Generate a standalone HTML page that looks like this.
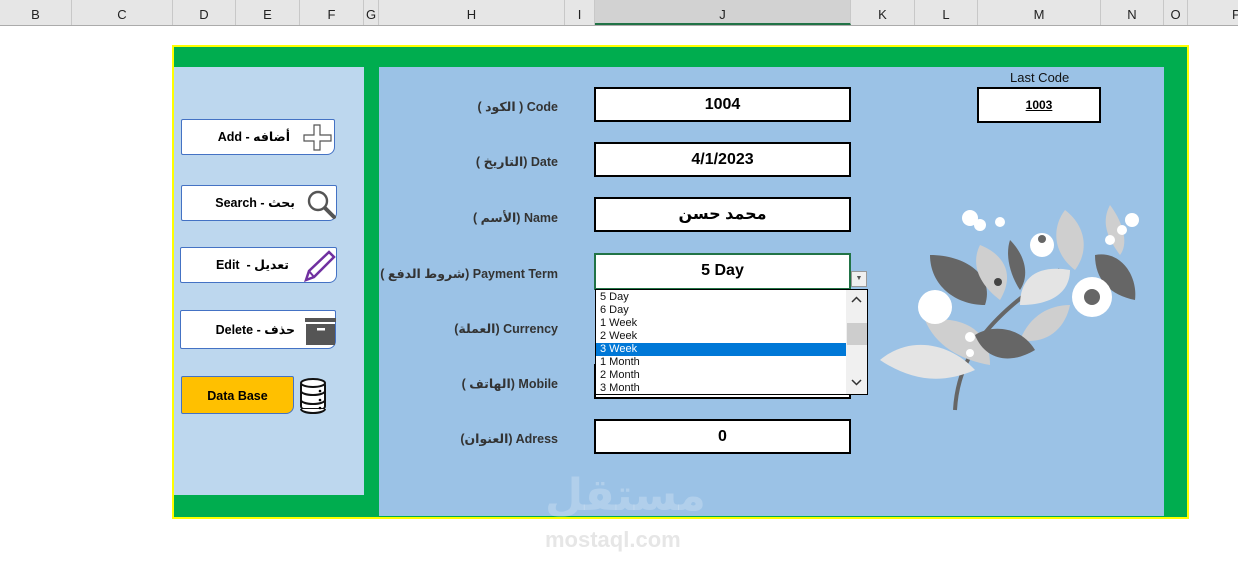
<!DOCTYPE html>
<html><head><meta charset="utf-8"><style>
body{margin:0;width:1238px;height:563px;background:#fff;position:relative;overflow:hidden;font-family:"Liberation Sans","DejaVu Sans",sans-serif}
.a{position:absolute}
.hdr{left:0;top:0;width:1238px;height:25px;background:#e6e6e6;border-bottom:1px solid #ababab}
.col{position:absolute;top:0;height:25px;font-size:13px;color:#222;text-align:center;line-height:30px;border-right:1px solid #c8c8c8;box-sizing:border-box}
.lbl{position:absolute;right:680px;font-size:12.5px;font-weight:bold;color:#333;white-space:nowrap}
.lbl span,.btn b{display:inline-block;font-weight:bold}
.box{position:absolute;left:594px;width:257px;height:35px;background:#fff;border:2px solid #000;box-sizing:border-box;text-align:center;font-weight:bold;font-size:16px;line-height:31px}
.btn{position:absolute;background:#fff;border:1px solid #4472c4;border-radius:2px 2px 8px 2px;box-sizing:border-box;font-weight:bold;font-size:12.5px;line-height:34px}
.btn span{position:absolute;white-space:nowrap}
.li{height:13px;font-size:11px;line-height:13px;padding-left:4px;color:#111}
</style></head><body>
<div class="a hdr"></div>
<div class="col" style="left:0;width:72px">B</div>
<div class="col" style="left:72px;width:101px">C</div>
<div class="col" style="left:173px;width:63px">D</div>
<div class="col" style="left:236px;width:64px">E</div>
<div class="col" style="left:300px;width:64px">F</div>
<div class="col" style="left:364px;width:15px">G</div>
<div class="col" style="left:379px;width:186px">H</div>
<div class="col" style="left:565px;width:30px">I</div>
<div class="col" style="left:595px;width:256px;background:#d2d2d2;border-bottom:2px solid #217346">J</div>
<div class="col" style="left:851px;width:64px">K</div>
<div class="col" style="left:915px;width:63px">L</div>
<div class="col" style="left:978px;width:123px">M</div>
<div class="col" style="left:1101px;width:63px">N</div>
<div class="col" style="left:1164px;width:24px">O</div>
<div class="col" style="left:1188px;width:60px;text-align:left;padding-left:44px">P</div>

<div class="a" style="left:172px;top:45px;width:1017px;height:474px;background:#00ad4f;border:2px solid #ffff00;box-sizing:border-box"></div>
<div class="a" style="left:174px;top:67px;width:190px;height:428px;background:#bdd7ee"></div>
<div class="a" style="left:379px;top:67px;width:785px;height:449px;background:#9bc2e6"></div>

<div class="lbl" style="top:99px"><span>(</span> <span>الكود</span> <span>)</span> Code</div>
<div class="lbl" style="top:154px"><span>(</span> <span>التاريخ</span><span>)</span> Date</div>
<div class="lbl" style="top:210px"><span>(</span> <span>الأسم</span><span>)</span> Name</div>
<div class="lbl" style="top:266px"><span>(</span> <span>شروط الدفع</span><span>)</span> Payment Term</div>
<div class="lbl" style="top:321px"><span>(</span><span>العملة</span><span>)</span> Currency</div>
<div class="lbl" style="top:376px"><span>(</span> <span>الهاتف</span><span>)</span> Mobile</div>
<div class="lbl" style="top:431px"><span>(</span><span>العنوان</span><span>)</span> Adress</div>

<div class="box" style="top:87px">1004</div>
<div class="box" style="top:142px">4/1/2023</div>
<div class="box" style="top:197px">محمد حسن</div>
<div class="box" style="top:364px"></div>
<div class="box" style="top:419px">0</div>
<div class="box" style="top:253px;border-color:#217346;height:37px">5 Day</div>
<div class="a" style="left:851px;top:271px;width:16px;height:16px;background:#f0f0f0;border:1px solid #999;box-sizing:border-box;font-size:7px;text-align:center;line-height:14px;color:#555">▼</div>
<div class="a" style="left:595px;top:289px;width:273px;height:106px;background:#fff;border:1px solid #000;box-sizing:border-box">
 <div style="position:absolute;left:0;top:1px;width:250px">
  <div class="li">5 Day</div><div class="li">6 Day</div><div class="li">1 Week</div><div class="li">2 Week</div>
  <div class="li" style="background:#0078d7;color:#fff">3 Week</div><div class="li">1 Month</div><div class="li">2 Month</div><div class="li">3 Month</div>
 </div>
 <div style="position:absolute;right:0;top:0;width:21px;height:104px;background:#f0f0f0">
  <div style="position:absolute;top:33px;left:1px;width:20px;height:22px;background:#cdcdcd"></div>
  <svg style="position:absolute;left:5px;top:6px" width="11" height="8"><path d="M1 6L5.5 1.5L10 6" stroke="#333" fill="none" stroke-width="1.5"/></svg>
  <svg style="position:absolute;left:5px;top:88px" width="11" height="8"><path d="M1 2L5.5 6.5L10 2" stroke="#333" fill="none" stroke-width="1.5"/></svg>
 </div>
</div>

<div class="a" style="left:1010px;top:70px;font-size:13px;color:#111">Last Code</div>
<div class="a" style="left:977px;top:87px;width:124px;height:36px;background:#fff;border:2px solid #000;box-sizing:border-box;text-align:center;font-weight:bold;font-size:12px;line-height:32px;text-decoration:underline">1003</div>

<div class="btn" style="left:181px;top:119px;width:154px;height:36px"><span style="right:44px">Add - <b>أضافه</b></span>
<svg style="position:absolute;left:121px;top:3px" width="30" height="28"><path d="M11 2h6v10h11v6H17v9h-6v-9H1v-6h10z" fill="#fff" stroke="#555" stroke-width="1.2"/></svg></div>
<div class="btn" style="left:181px;top:185px;width:156px;height:36px"><span style="right:41px">Search - <b>بحث</b></span>
<svg style="position:absolute;left:123px;top:2px" width="32" height="32"><circle cx="13" cy="13" r="9" fill="none" stroke="#555" stroke-width="2.4"/><path d="M20 20l9 9" stroke="#555" stroke-width="4" stroke-linecap="round"/></svg></div>
<div class="btn" style="left:180px;top:247px;width:157px;height:36px"><span style="right:47px">Edit&nbsp; - <b>تعديل</b></span>
<svg style="position:absolute;left:121px;top:2px" width="34" height="32"><path d="M4 30l3-9L27 2l5 5L12 27z" fill="none" stroke="#7030a0" stroke-width="2.5"/><path d="M7 21l5 6" stroke="#7030a0" stroke-width="2"/></svg></div>
<div class="btn" style="left:180px;top:310px;width:156px;height:39px;line-height:38px"><span style="right:40px">Delete - <b>حذف</b></span>
<svg style="position:absolute;left:124px;top:7px" width="31" height="27"><rect x="0" y="0" width="31" height="4" fill="#555"/><rect x="1" y="6" width="29" height="21" fill="#555"/><rect x="12" y="10" width="8" height="2.5" fill="#fff"/></svg></div>
<div class="btn" style="left:181px;top:376px;width:113px;height:38px;background:#ffc000;text-align:center;line-height:38px">Data Base</div>
<svg class="a" style="left:299px;top:378px" width="28" height="36"><g fill="#fff" stroke="#111" stroke-width="2"><rect x="2" y="4" width="24" height="27" rx="3"/><ellipse cx="14" cy="5" rx="12" ry="4"/><path d="M2 13c0 2 5 4 12 4s12-2 12-4"/><path d="M2 22c0 2 5 4 12 4s12-2 12-4"/><path d="M2 31c0 2 5 4 12 4s12-2 12-4"/></g><circle cx="21" cy="13" r="1.3"/><circle cx="21" cy="22" r="1.3"/><circle cx="21" cy="30" r="1.3"/></svg>

<svg class="a" style="left:870px;top:195px" width="280" height="220">
<path d="M85 215C88 160 120 120 190 75" stroke="#666" stroke-width="4" fill="none"/>
<path d="M10 165C40 140 80 148 105 175C70 190 40 185 10 165Z" fill="#e4e4e4"/>
<path d="M55 125C100 120 120 140 120 170C90 165 65 150 55 125Z" fill="#cfcfcf"/>
<path d="M150 145C160 120 180 110 200 110C195 135 175 150 150 145Z" fill="#cfcfcf"/>
<path d="M105 140C120 130 150 130 165 155C140 170 115 165 105 140Z" fill="#666"/>
<path d="M150 110C150 80 170 70 200 75C200 95 185 110 150 110Z" fill="#e4e4e4"/>
<path d="M60 60C95 60 125 80 115 110C85 110 60 90 60 60Z" fill="#666"/>
<path d="M110 50C135 60 145 80 130 105C110 90 100 70 110 50Z" fill="#cfcfcf"/>
<path d="M140 45C155 60 160 80 150 95C140 80 135 60 140 45Z" fill="#666"/>
<path d="M195 15C215 30 220 55 205 75C185 60 180 35 195 15Z" fill="#cfcfcf"/>
<path d="M240 10C255 30 258 50 250 60C235 40 232 25 240 10Z" fill="#cfcfcf"/>
<path d="M225 60C250 55 268 80 265 105C240 100 225 85 225 60Z" fill="#666"/>
<circle cx="222" cy="102" r="20" fill="#fff"/><circle cx="222" cy="102" r="8" fill="#666"/>
<circle cx="65" cy="112" r="17" fill="#fff"/>
<circle cx="172" cy="50" r="12" fill="#fff"/><circle cx="172" cy="44" r="4" fill="#666"/>
<circle cx="128" cy="87" r="4" fill="#444"/>
<circle cx="100" cy="23" r="8" fill="#fff"/><circle cx="110" cy="30" r="6" fill="#fff"/><circle cx="130" cy="27" r="5" fill="#fff"/>
<circle cx="262" cy="25" r="7" fill="#fff"/><circle cx="252" cy="35" r="5" fill="#fff"/><circle cx="240" cy="45" r="5" fill="#fff"/>
<circle cx="100" cy="142" r="5" fill="#fff"/><circle cx="100" cy="158" r="4" fill="#fff"/>
</svg>

<div class="a" style="left:545px;top:470px;font-size:44px;font-weight:bold;color:rgba(255,255,255,0.22)">مستقل</div>
<div class="a" style="left:545px;top:527px;font-size:22px;font-weight:bold;color:rgba(200,200,200,0.45)">mostaql.com</div>
</body></html>
